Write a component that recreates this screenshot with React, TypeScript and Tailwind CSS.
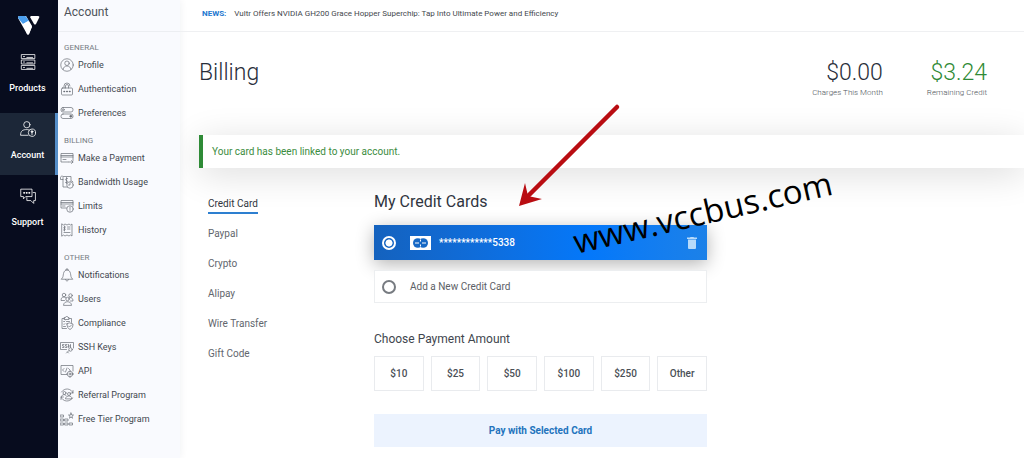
import React, { useState } from 'react';

interface MenuItem {
  label: string;
  icon: React.ReactNode;
}

interface MenuSection {
  title: string;
  items: MenuItem[];
}

interface LineIconProps {
  className: string;
  children: React.ReactNode;
}

const LineIcon: React.FC<LineIconProps> = ({ className, children }) => (
  <svg
    viewBox="0 0 28 28"
    fill="none"
    stroke="currentColor"
    strokeLinecap="round"
    strokeLinejoin="round"
    className={className}
    aria-hidden="true"
  >
    {children}
  </svg>
);

const sections: MenuSection[] = [
  {
    title: 'GENERAL',
    items: [
      {
        label: 'Profile',
        icon: (
          <>
            <circle cx="14" cy="14" r="12.5" />
            <circle cx="14" cy="10.5" r="4.5" />
            <path d="M6 23c1-5 4-7 8-7s7 2 8 7" />
          </>
        ),
      },
      {
        label: 'Authentication',
        icon: (
          <>
            <rect x="3" y="12" width="22" height="14" rx="2" />
            <path d="M8 12V8a6 6 0 0 1 12 0M11 12V8a3 3 0 0 1 6 0v4" />
            <path d="M8 19h1M13.5 19h1M19 19h1" strokeWidth="3" />
          </>
        ),
      },
      {
        label: 'Preferences',
        icon: (
          <>
            <rect x="2" y="3" width="24" height="9" rx="4" />
            <rect x="2" y="16" width="24" height="9" rx="4" />
            <circle cx="6.5" cy="7.5" r="2" />
            <circle cx="21.5" cy="20.5" r="2" fill="currentColor" />
          </>
        ),
      },
    ],
  },
  {
    title: 'BILLING',
    items: [
      {
        label: 'Make a Payment',
        icon: (
          <>
            <path d="M17 22H2V5h24v14" />
            <path d="M2 9h24M2 12h24M6 17h6M18 22h8M23 19l3 3-3 3" />
          </>
        ),
      },
      {
        label: 'Bandwidth Usage',
        icon: (
          <>
            <path d="M6 9H1V5a3 3 0 0 1 5-2h16v10M6 5v19h8" />
            <path d="M15 7c-5-1-5 4-2 4s3 5-2 4M13 5v12" />
            <circle cx="20" cy="20" r="6.5" />
            <path d="M20 16v4h-3M24 12l2 2" />
          </>
        ),
      },
      {
        label: 'Limits',
        icon: (
          <>
            <path d="M13 18H2V3h24v11" />
            <path d="M2 7h24M2 10h24M5 14h5" />
            <circle cx="20" cy="20" r="6.5" />
            <path d="M20 16v5M20 23.5v.5" />
          </>
        ),
      },
      {
        label: 'History',
        icon: (
          <>
            <path d="M4 2l3 2 3-2 4 2 4-2 3 2 3-2v24l-3-2-3 2-4-2-4 2-3-2-3 2z" />
            <path d="M11 8c-5-1-4 3-2 3s3 4-2 3M9 6v10M15 8h5M15 12h5M8 19h12" />
          </>
        ),
      },
    ],
  },
  {
    title: 'OTHER',
    items: [
      {
        label: 'Notifications',
        icon: (
          <>
            <path d="M3 22c4-3 3-7 4-11 1-5 4-7 7-7s6 2 7 7c1 4 0 8 4 11z" />
            <path d="M12 4V2h4v2M11 23c0 4 6 4 6 0" />
          </>
        ),
      },
      {
        label: 'Users',
        icon: (
          <>
            <circle cx="8" cy="6" r="3.5" />
            <circle cx="21" cy="7" r="3.5" />
            <circle cx="15" cy="14" r="3.5" />
            <path d="M9 17H2c0-5 2-7 6-7 2 0 3 1 4 2M18 12c4-2 8 0 8 6h-5M7 26c0-9 16-9 16 0z" />
          </>
        ),
      },
      {
        label: 'Compliance',
        icon: (
          <>
            <path d="M13 25H4V5h5M18 5h5v8M9 3h2c0-3 5-3 5 0h2v4H9z" />
            <path d="M7 11l1 1 2-2M13 11h6M7 16l1 1 2-2M13 16h1M7 21h4" />
            <path d="M20 14l6 2c0 6-2 9-6 11-4-2-6-5-6-11z" />
            <path d="M17 20l2 2 4-4" />
          </>
        ),
      },
      {
        label: 'SSH Keys',
        icon: (
          <>
            <path d="M13 19H1V5h26v11" />
            <path d="M8 9H5v3h3v3H5M14 9h-3v3h3v3h-3M17 9v6M21 9v6M17 12h4" />
            <circle cx="21" cy="19" r="3.5" />
            <path d="M18 21l-5 5M15 24l2 2" />
          </>
        ),
      },
      {
        label: 'API',
        icon: (
          <>
            <path d="M13 21H2V3h24v11" />
            <path d="M8 9l-3 3 3 3M14 8l-3 8M17 9l3 3" />
            <circle cx="20" cy="20" r="5.5" />
            <circle cx="20" cy="20" r="2" />
            <path d="M20 13v1M20 26v1M27 20h-1M14 20h-1" />
          </>
        ),
      },
      {
        label: 'Referral Program',
        icon: (
          <>
            <path d="M3 8C9-1 22 0 26 10M25 20C19 29 6 28 2 18M26 5v5h-5M2 23v-5h5" />
            <circle cx="9" cy="10" r="3" />
            <circle cx="18" cy="12" r="3" />
            <path d="M3 17c1-5 8-5 10-1M11 21c1-7 13-7 13 0z" />
          </>
        ),
      },
      {
        label: 'Free Tier Program',
        icon: (
          <>
            <rect x="1" y="6" width="6" height="4" />
            <rect x="1" y="14" width="6" height="4" />
            <rect x="10" y="14" width="6" height="4" />
            <rect x="1" y="22" width="6" height="4" />
            <rect x="10" y="22" width="6" height="4" />
            <rect x="19" y="22" width="6" height="4" />
            <path d="M22 2l1.5 4H27l-3 2.5 1 4-3-2.5-3 2.5 1-4-3-2.5h3.5z" />
          </>
        ),
      },
    ],
  },
];

const railItems: MenuItem[] = [
  {
    label: 'Products',
    icon: (
      <>
        <rect x="3" y="1" width="23" height="7" />
        <rect x="3" y="10.5" width="23" height="7" />
        <rect x="3" y="20" width="23" height="7" />
        <path d="M6 4.5h2M6 14h2M6 23.5h2M12 6h10M12 15.5h10M12 25h10" />
      </>
    ),
  },
  {
    label: 'Account',
    icon: (
      <>
        <circle cx="12" cy="6.5" r="5.5" />
        <path d="M14 25H1c0-8 4-10 11-10 2 0 3 0 4 1" />
        <circle cx="21" cy="20.5" r="6.5" />
        <path d="M21 20v4" />
        <circle cx="21" cy="18.5" r="1.5" fill="currentColor" />
      </>
    ),
  },
  {
    label: 'Support',
    icon: (
      <>
        <path d="M2 2h19v13H10l-4 4v-4H2z" />
        <path d="M23 8h4v14h-3v5l-5-5h-7v-5" />
        <path d="M7 8.5h.5M11.5 8.5h.5M16 8.5h.5" strokeWidth="3" />
      </>
    ),
  },
];

const paymentMethods = ['Credit Card', 'Paypal', 'Crypto', 'Alipay', 'Wire Transfer', 'Gift Code'];
const amounts = ['$10', '$25', '$50', '$100', '$250', 'Other'];

const Rail: React.FC = () => (
  <nav className="flex w-[58px] shrink-0 flex-col bg-[#070c1e] text-white" aria-label="Main">
    <a href="#home" aria-label="Home" className="flex h-[46px] justify-center pt-4">
      <svg viewBox="0 0 22 19" className="h-[19px] w-[22px]">
        <path d="M1 0h7l6 10-3 8q-1 1-2 0L0 2Q0 0 1 0z" fill="#fff" />
        <path d="M1 0h6q1 0 2 2l2 3-6 3L0 2Q0 0 1 0z" fill="#4b9fee" />
        <path d="M5 8l5-3 4 6-3 7q-1 1-2 0z" fill="#fff" />
        <path d="M13 0h7q2 0 1 2l-3 6q-1 1-2 0l-4-7z" fill="#fff" />
      </svg>
    </a>
    <ul className="flex flex-col gap-[5px]">
      {railItems.map((item) => (
        <li key={item.label}>
          <a
            href={`#${item.label}`}
            className={`flex h-[62px] flex-col items-center gap-2.5 border-r-3 pt-2 text-[9px] leading-4 font-medium ${
              item.label === 'Account' ? 'border-[#5791cc] bg-[#1c2738]' : 'border-transparent'
            }`}
          >
            <LineIcon className="h-4 w-4 stroke-[1.4]">{item.icon}</LineIcon>
            {item.label}
          </a>
        </li>
      ))}
    </ul>
  </nav>
);

const AccountMenu: React.FC = () => (
  <aside className="w-[122px] shrink-0 bg-[#f9fafe] shadow-[0_0_8px_rgba(30,40,70,0.07)]">
    <h2 className="h-8 border-b border-[#eceef2] pl-1.5 text-[12px] leading-6 text-[#4d5259]">Account</h2>
    {sections.map((section) => (
      <section key={section.title}>
        <h3 className="h-5 pt-2.5 pl-1.5 text-[8px] leading-3 text-[#777c84]">{section.title}</h3>
        <ul className="pt-px">
          {section.items.map((item) => (
            <li key={item.label}>
              <a
                href={`#${item.label}`}
                className="flex h-6 items-center gap-1 pl-0.5 text-[9px] leading-4 whitespace-nowrap text-[#42474e]"
              >
                <LineIcon className="h-3.5 w-3.5 shrink-0 stroke-[1.4] text-[#686d75]">{item.icon}</LineIcon>
                {item.label}
              </a>
            </li>
          ))}
        </ul>
      </section>
    ))}
  </aside>
);

const Annotation: React.FC = () => (
  <>
    <svg viewBox="0 0 104 104" className="pointer-events-none absolute top-[103px] left-[518px] h-[104px] w-[104px]">
      <path d="M99 4L8 95" stroke="#b90d12" strokeWidth="4.5" strokeLinecap="round" />
      <path d="M1 103L7 80l3 13 14 3z" fill="#b90d12" />
    </svg>
    <p className="pointer-events-none absolute top-[222px] left-[576px] origin-[0_30px] -rotate-13 font-['Open_Sans',sans-serif] text-[33px] leading-10 font-medium text-black">
      www.vccbus.com
    </p>
  </>
);

const App: React.FC = () => {
  const [card, setCard] = useState('5338');
  const [amount, setAmount] = useState('');

  return (
    <div className="relative flex min-h-screen bg-white font-['Roboto',sans-serif]">
      <Rail />
      <AccountMenu />

      <main className="min-w-0 flex-1 overflow-hidden">
        <header className="flex h-8 gap-2 border-b border-[#eff0f2] pl-[22px] text-[8px] leading-7 text-[#44484e]">
          <strong className="font-bold text-[#2378cf]">NEWS:</strong>
          <a href="#news">Vultr Offers NVIDIA GH200 Grace Hopper Superchip: Tap Into Ultimate Power and Efficiency</a>
        </header>

        <div className="pl-[19px]">
          <div className="flex items-start justify-between pt-[27px] pr-[37px] pb-[34px]">
            <h1 className="text-[23px] leading-7 font-light text-[#282e3a]">Billing</h1>
            <dl className="flex gap-11 text-right font-light">
              <div className="flex h-[42px] flex-col-reverse justify-end">
                <dt className="text-[8px] leading-3 text-[#4d5259]">Charges This Month</dt>
                <dd className="text-[23px] leading-7 text-[#282e3a]">$0.00</dd>
              </div>
              <div className="flex h-[42px] flex-col-reverse justify-end">
                <dt className="text-[8px] leading-3 text-[#4d5259]">Remaining Credit</dt>
                <dd className="text-[23px] leading-7 text-[#2f8a35]">$3.24</dd>
              </div>
            </dl>
          </div>

          <p
            role="status"
            className="border-l-4 border-[#2f8b37] bg-white py-2 pl-[9px] text-[10px] leading-[17px] text-[#3c8c40] shadow-[0_6px_36px_rgba(0,0,0,0.14)]"
          >
            Your card has been linked to your account.
          </p>

          <div className="grid grid-cols-[175px_minmax(0,333px)] pt-[22px] pb-[11px]">
            <ul className="flex flex-col items-start gap-2.5 pt-1 pl-[9px] text-[10px] leading-5 text-[#62666d]">
              {paymentMethods.map((method, index) => (
                <li key={method}>
                  <a
                    href={`#${method}`}
                    className={`block h-5 border-b-2 ${
                      index === 0 ? 'border-[#2d7fd0] text-[#30353d]' : 'border-transparent'
                    }`}
                  >
                    {method}
                  </a>
                </li>
              ))}
            </ul>

            <form onSubmit={(e) => e.preventDefault()}>
              <h2 className="mb-[11px] text-[16px] leading-6 text-[#30353f]">My Credit Cards</h2>

              <div className="flex h-[35px] items-center bg-linear-to-r from-[#1462be] via-[#0478fa] via-65% to-[#1c81e8] pr-2.5 pl-2 text-[10px] font-medium text-white shadow-[0_4px_18px_rgba(0,0,0,0.3)]">
                <label className="flex flex-1 items-center">
                  <input
                    type="radio"
                    name="card"
                    checked={card === '5338'}
                    onChange={() => setCard('5338')}
                    className="h-3.5 w-3.5 appearance-none rounded-full border-2 border-white checked:bg-[radial-gradient(#fff_45%,transparent_55%)]"
                  />
                  <svg viewBox="0 0 21 14" className="mr-2 ml-3.5 h-3.5 w-[21px]">
                    <rect width="21" height="14" fill="#fff" />
                    <circle cx="7.8" cy="7" r="4.8" fill="#1769c5" />
                    <circle cx="13.2" cy="7" r="4.8" fill="#1769c5" />
                    <path d="M5 7h4M12 7h4M10.5 3.5v2M10.5 8.5v2" stroke="#fff" strokeWidth="1" />
                  </svg>
                  ************5338
                </label>
                <button type="button" aria-label="Delete card">
                  <svg viewBox="0 0 10 12" className="h-3 w-2.5" fill="#b7dafa">
                    <path d="M0 .5h3L3.500 0h3L7 .5h3V2H0zM1 2.500h8V11q0 1-1 1H2q-1 0-1-1z" />
                  </svg>
                </button>
              </div>

              <label className="mt-2.5 flex h-[33px] items-center gap-3.5 border border-[#eceef0] bg-white pl-[7px] text-[10px] text-[#5c6066]">
                <input
                  type="radio"
                  name="card"
                  checked={card === 'new'}
                  onChange={() => setCard('new')}
                  className="h-3.5 w-3.5 appearance-none rounded-full border-2 border-[#777b81] checked:bg-[radial-gradient(#5c6066_45%,transparent_55%)]"
                />
                Add a New Credit Card
              </label>

              <h3 className="mt-[27px] mb-2 text-[12px] leading-[18px] text-[#41464e]">Choose Payment Amount</h3>
              <div className="grid grid-cols-6 gap-[7px]">
                {amounts.map((value) => (
                  <button
                    key={value}
                    type="button"
                    aria-pressed={amount === value}
                    onClick={() => setAmount(value)}
                    className="h-[35px] border border-[#e9ebee] text-[10px] font-medium text-[#4a4f56]"
                  >
                    {value}
                  </button>
                ))}
              </div>

              <button type="submit" className="mt-[23px] h-[33px] w-full bg-[#ecf3fe] text-[10px] font-bold text-[#2373bd]">
                Pay with Selected Card
              </button>
            </form>
          </div>
        </div>
      </main>

      <Annotation />
    </div>
  );
};

export default App;
